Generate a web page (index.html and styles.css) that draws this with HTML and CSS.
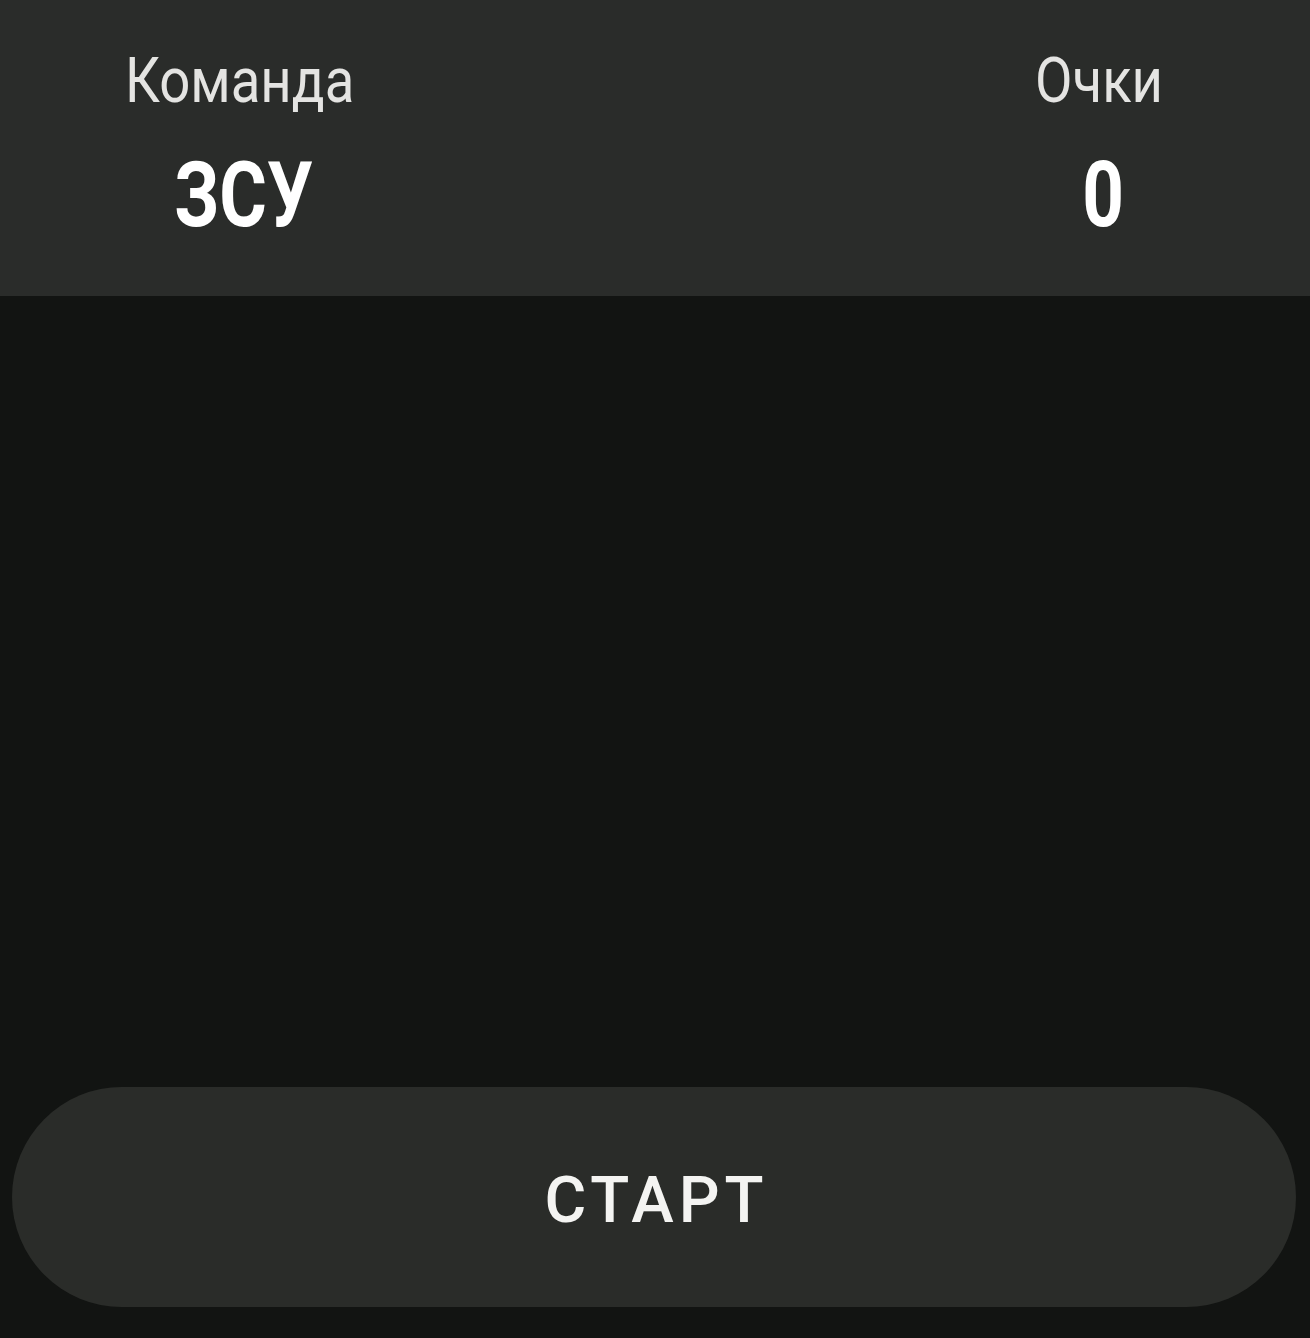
FILE: index.html
```html
<!DOCTYPE html>
<html lang="ru">
<head>
<meta charset="utf-8">
<title>Команда</title>
<link rel="stylesheet" href="styles.css">
</head>
<body>
<div class="screen">
  <header class="scorebar">
    <div class="col col-team">
      <span class="label">Команда</span>
      <span class="value">ЗСУ</span>
    </div>
    <div class="col col-score">
      <span class="label">Очки</span>
      <span class="value">0</span>
    </div>
  </header>
  <main class="field"></main>
  <footer class="actions">
    <button class="start">СТАРТ</button>
  </footer>
</div>
</body>
</html>
```
FILE: styles.css
```css
html, body {
  margin: 0;
  padding: 0;
  background: #121412;
}
.screen {
  width: 1310px;
  height: 1338px;
  display: flex;
  flex-direction: column;
  font-family: Roboto, "Noto Sans", "Liberation Sans", sans-serif;
}
.scorebar {
  height: 296px;
  box-sizing: border-box;
  background: #2a2c2a;
  display: flex;
  justify-content: space-between;
  padding-top: 44px;
}
.col {
  width: 300px;
  display: flex;
  flex-direction: column;
  align-items: center;
}
.col-team { margin-left: 90px; }
.col-score { margin-right: 61px; }
.label {
  display: inline-block;
  font-size: 63px;
  line-height: 74px;
  font-weight: 400;
  color: #e4e4e2;
  transform: scaleX(0.865);
}
.value {
  display: inline-block;
  margin-top: 28px;
  margin-left: 8px;
  font-size: 91px;
  line-height: 98px;
  font-weight: 700;
  color: #ffffff;
  transform: scaleX(0.8);
}
.field {
  flex: 1;
}
.actions {
  padding: 0 14px 31px 12px;
}
.start {
  width: 100%;
  height: 220px;
  border: none;
  border-radius: 110px;
  background: #2a2c29;
  color: #f4f4f2;
  font-family: Roboto, "Noto Sans", "Liberation Sans", sans-serif;
  font-size: 64px;
  font-weight: 500;
  letter-spacing: 5px;
  padding: 7px 0 0 5px;
  display: flex;
  align-items: center;
  justify-content: center;
}
```
